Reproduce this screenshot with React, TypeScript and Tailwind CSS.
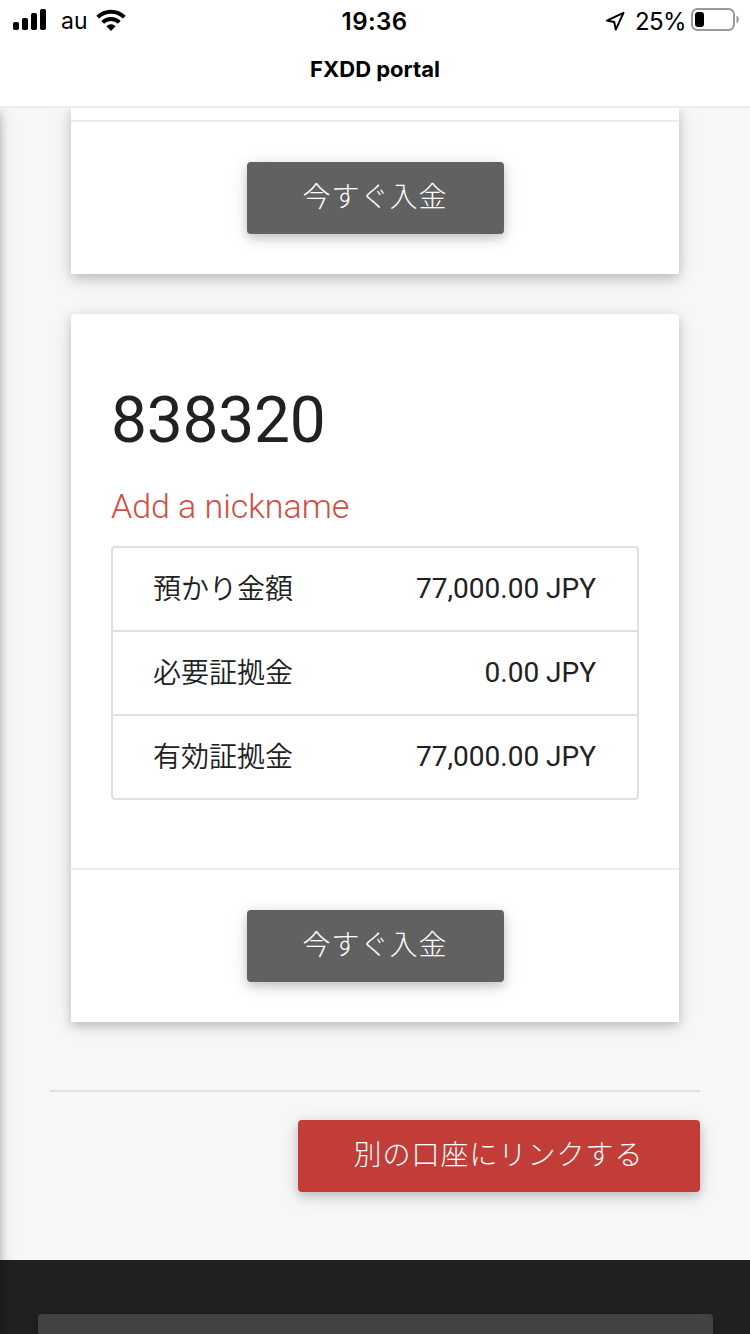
import React from "react";

interface BalanceRow {
  label: string;
  value: string;
}

const balances: BalanceRow[] = [
  { label: "預かり金額", value: "77,000.00 JPY" },
  { label: "必要証拠金", value: "0.00 JPY" },
  { label: "有効証拠金", value: "77,000.00 JPY" },
];

function StatusBar() {
  return (
    <div className="flex h-10 items-center justify-between pl-[13px] pr-[11px] text-black">
      <div className="flex w-[240px] items-center">
        <svg className="-mt-px h-[21px] w-[33px]" viewBox="0 0 33 21">
          <rect x="0" y="13" width="6" height="8" rx="1.8" />
          <rect x="9" y="9" width="6" height="12" rx="1.8" />
          <rect x="18" y="4" width="6" height="17" rx="1.8" />
          <rect x="27" y="0" width="6" height="21" rx="1.8" />
        </svg>
        <span className="ml-[15px] mt-[2px] text-[23px] leading-none">au</span>
        <svg className="ml-[8px] mt-px h-[23px] w-[30px]" viewBox="0 0 30 23" fill="none" stroke="#000" strokeWidth="4">
          <path d="M1.7 8.2a18.8 18.8 0 0 1 26.6 0" />
          <path d="M6.7 13.4a11.8 11.8 0 0 1 16.6 0" />
          <path d="M10.4 17.2a6.6 6.6 0 0 1 9.2 0L15 22z" fill="#000" stroke="none" />
        </svg>
      </div>
      <span className="mr-[3px] mt-[3px] text-[24px] font-semibold leading-none tracking-[0.4px]">19:36</span>
      <div className="flex w-[240px] items-center justify-end">
        <svg className="mt-[1px] h-[20px] w-[20px]" viewBox="0 0 20 20" fill="none" stroke="#000" strokeWidth="2" strokeLinejoin="round">
          <path d="M18.500 1.800 1.800 9.600l7.400 1.300L10.800 18.500z" />
        </svg>
        <span className="ml-[10px] mt-[3px] text-[24px] leading-none tracking-[-0.6px]">25%</span>
        <svg className="ml-[5px] -mt-px h-[23px] w-[48px]" viewBox="0 0 48 23">
          <rect x="1" y="1" width="42" height="21" rx="5.5" fill="none" stroke="#999" strokeWidth="2" />
          <rect x="4" y="4" width="9" height="15" rx="3" />
          <path d="M45.5 7.5c3 1.5 3 6.5 0 8z" fill="#999" />
        </svg>
      </div>
    </div>
  );
}

function DepositButton() {
  return (
    <button className="mx-auto block h-[72px] w-[257px] rounded-[4px] bg-[#616161] text-[28px] font-light tracking-[1px] text-white shadow-[0_4px_10px_0_rgba(0,0,0,0.16),0_4px_20px_0_rgba(0,0,0,0.12)]">
      今すぐ入金
    </button>
  );
}

export default function App() {
  return (
    <div className="flex h-[1334px] w-[750px] flex-col overflow-hidden bg-[#f7f7f7] font-['Roboto','Noto_Sans_CJK_JP',sans-serif] text-[#212121]">
      <header className="h-[108px] shrink-0 border-b-2 border-[#ececec] bg-white font-['Inter',sans-serif]">
        <StatusBar />
        <h1 className="mt-[15px] text-center text-[22px] font-bold leading-[28px] text-black">FXDD portal</h1>
      </header>

      <div className="relative flex flex-1 flex-col overflow-hidden">
        {/* shadow of the closed side nav */}
        <div className="absolute -left-[22px] top-0 h-[1300px] w-5 shadow-[0_4px_10px_0_rgba(0,0,0,0.3),0_4px_20px_0_rgba(0,0,0,0.2)]"></div>

        <section className="mx-[71px] h-[166px] shrink-0 bg-white shadow-[0_4px_10px_0_rgba(0,0,0,0.16),0_4px_20px_0_rgba(0,0,0,0.12)]">
          <div className="mt-3 border-t-2 border-[#ececec] pt-10">
            <DepositButton />
          </div>
        </section>

        <section className="mx-[71px] mt-10 flex h-[708px] shrink-0 flex-col rounded-t-[4px] bg-white shadow-[0_4px_10px_0_rgba(0,0,0,0.16),0_4px_20px_0_rgba(0,0,0,0.12)]">
          <div className="flex-1 px-10 pt-[71px]">
            <h2 className="text-[64px] leading-[72px] tracking-[-0.2px]">838320</h2>
            <a className="mt-[28px] block text-[34px] font-light leading-[42px] tracking-[-0.05px] text-[#d54c40]">Add a nickname</a>
            <ul className="mt-[19px] divide-y-2 divide-[#e0e0e0] rounded-[4px] border-2 border-[#e0e0e0] text-[28px]">
              {balances.map((row) => (
                <li key={row.label} className="flex h-[84px] items-center justify-between pl-10 pr-[41px] last:h-[82px]">
                  <span className="mb-1 font-['Noto_Sans_CJK_JP',sans-serif] font-[350] leading-[40px]">{row.label}</span>
                  <span>{row.value}</span>
                </li>
              ))}
            </ul>
          </div>
          <div className="h-[154px] border-t-2 border-[#ececec] pt-10">
            <DepositButton />
          </div>
        </section>

        <div className="mx-[50px] mt-[68px] flex justify-end border-t-2 border-[#e0e0e0] pt-7">
          <button className="h-[72px] w-[402px] rounded-[4px] bg-[#c23d38] pr-[1px] text-[28px] font-light tracking-[1px] text-white shadow-[0_4px_10px_0_rgba(0,0,0,0.16),0_4px_20px_0_rgba(0,0,0,0.12)]">
            別の口座にリンクする
          </button>
        </div>

        <footer className="mt-[68px] flex-1 bg-[#212121] pl-[38px] pr-[37px] pt-[54px]">
          <div className="h-10 rounded-[4px] bg-[#424242] shadow-[0_4px_10px_0_rgba(0,0,0,0.16),0_4px_20px_0_rgba(0,0,0,0.12)]"></div>
        </footer>
      </div>
    </div>
  );
}
